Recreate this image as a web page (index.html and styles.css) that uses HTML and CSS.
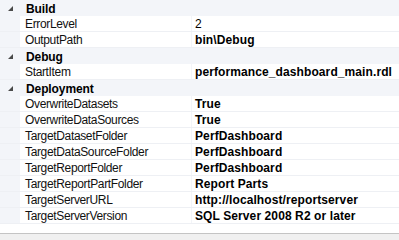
FILE: index.html
```html
<!DOCTYPE html>
<html>
<head>
<meta charset="utf-8">
<link rel="stylesheet" href="styles.css">
</head>
<body>
<div class="page">
  <div class="grid">
    <div class="cat"><span class="tri"></span><span class="cat-label">Build</span></div>
    <div class="prop"><span class="name">ErrorLevel</span><span class="val normal">2</span></div>
    <div class="prop"><span class="name">OutputPath</span><span class="val">bin\Debug</span></div>
    <div class="cat"><span class="tri"></span><span class="cat-label">Debug</span></div>
    <div class="prop"><span class="name">StartItem</span><span class="val">performance_dashboard_main.rdl</span></div>
    <div class="cat"><span class="tri"></span><span class="cat-label">Deployment</span></div>
    <div class="prop"><span class="name">OverwriteDatasets</span><span class="val">True</span></div>
    <div class="prop"><span class="name">OverwriteDataSources</span><span class="val">True</span></div>
    <div class="prop"><span class="name">TargetDatasetFolder</span><span class="val">PerfDashboard</span></div>
    <div class="prop"><span class="name">TargetDataSourceFolder</span><span class="val">PerfDashboard</span></div>
    <div class="prop"><span class="name">TargetReportFolder</span><span class="val">PerfDashboard</span></div>
    <div class="prop"><span class="name">TargetReportPartFolder</span><span class="val">Report Parts</span></div>
    <div class="prop"><span class="name">TargetServerURL</span><span class="val">http://localhost/reportserver</span></div>
    <div class="prop"><span class="name">TargetServerVersion</span><span class="val">SQL Server 2008 R2 or later</span></div>
  </div>
  <div class="spacer"></div>
  <div class="footer"></div>
</div>
</body>
</html>
```
FILE: styles.css
```css
html, body {
  margin: 0;
  padding: 0;
  background: #ffffff;
}
.page {
  width: 399px;
  height: 240px;
  display: flex;
  flex-direction: column;
  font-family: "Liberation Sans", Arial, sans-serif;
  font-size: 12px;
  color: #000;
  overflow: hidden;
}
.grid {
  display: flex;
  flex-direction: column;
  background: #f3f5f9;
}
.cat {
  height: 16px;
  display: flex;
  align-items: center;
  padding-top: 1px;
  box-sizing: border-box;
  background: #f3f5f9;
}
.tri {
  width: 0;
  height: 0;
  margin-left: 8px;
  margin-right: 13px;
  border-left: 5px solid transparent;
  border-bottom: 5px solid #4a4a4a;
}
.cat-label {
  font-weight: bold;
  letter-spacing: -0.1px;
}
.prop {
  height: 16px;
  display: grid;
  grid-template-columns: 171px 1fr;
  column-gap: 1px;
  padding-left: 20px;
  box-sizing: border-box;
  border-bottom: 1px solid #eef0f4;
}
.prop .name,
.prop .val {
  background: #fff;
  display: flex;
  align-items: center;
  white-space: nowrap;
  overflow: hidden;
  padding-top: 1px;
}
.name {
  padding-left: 5px;
  letter-spacing: -0.35px;
  color: #111;
}
.val {
  padding-left: 3px;
  font-weight: bold;
  letter-spacing: 0.1px;
}
.val.normal {
  font-weight: normal;
}
.spacer {
  flex: 1;
}
.footer {
  height: 6px;
  border-top: 1px solid #c4c4c4;
  background: #f0f0f0;
}
```
